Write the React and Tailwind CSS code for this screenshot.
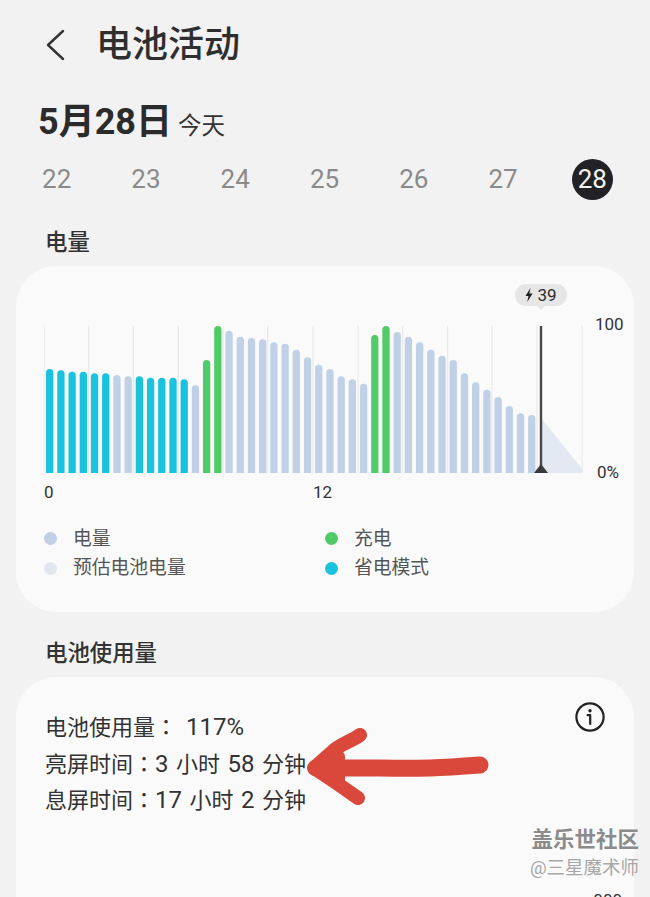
const CYAN = "#19c3dd";
const GREEN = "#50cb68";
const BLUE = "#c0d0e6";

const tops = [297,301,305,305,310,310,315,319,319,323,323,323,328,346,270,168,182,200,204,208,217,221,239,262,284,297,319,328,341,195,168,186,200,217,239,257,270,310,337,359,381,408,430,435];
const colorOf = (i) => {
  if (i <= 5 || (i >= 8 && i <= 12)) return CYAN;
  if (i === 14 || i === 15 || i === 29 || i === 30) return GREEN;
  return BLUE;
};

function Chart() {
  const grid = [44, 88.7, 133.3, 178.3, 223, 267.7, 313, 358, 402.7, 447.7, 492, 537, 582];
  return (
    <svg width="539" height="148" viewBox="44 326 539 148" className="shrink-0 block">
      {grid.map((x) => (
        <rect key={x} x={x - 0.5} y="326" width="1" height="147" fill="#e5e5e5" />
      ))}
      <polygon points="541,418 583,470 583,473 541,473" fill="#e3e9f2" />
      {tops.map((t, i) => {
        const cx = 49.7 + i * 11.21;
        const top = 270 + t / 3;
        const l = cx - 3.65;
        const r = cx + 3.65;
        return (
          <path
            key={i}
            d={`M${l} 473 V${top + 3.65} A3.65 3.65 0 0 1 ${r} ${top + 3.65} V473 Z`}
            fill={colorOf(i)}
          />
        );
      })}
      <rect x="539.8" y="326" width="2.4" height="147" fill="#484848" />
      <polygon points="541,464 548,473 534,473" fill="#3a3a3a" />
    </svg>
  );
}

function Legend({ color, label }) {
  return (
    <div className="flex items-center h-[29.5px]">
      <span className="w-[13px] h-[13px] rounded-full shrink-0" style={{ background: color }} />
      <span className="ml-[16px] text-[18.8px] leading-[24px] text-[#555555]">{label}</span>
    </div>
  );
}

const Colon = () => <span className="font-['Noto_Sans_CJK_TC',sans-serif]">：</span>;
const Num = ({ children }) => <span className="text-[24px]">{children}</span>;

export default function App() {
  const days = [22, 23, 24, 25, 26, 27];
  return (
    <div className="relative h-[897px] w-[650px] overflow-hidden bg-[#f2f2f2] text-[#2b2b2b] font-['Roboto','Noto_Sans_CJK_SC',sans-serif]">
      <div className="flex items-center h-[90px] pl-[46px]">
        <svg width="20" height="32" viewBox="0 0 20 32" fill="none" className="shrink-0">
          <polyline points="17,2 2,16 17,30" stroke="#333333" strokeWidth="2.4" strokeLinecap="round" strokeLinejoin="round" />
        </svg>
        <h1 className="ml-[30px] text-[36px] leading-[44px] font-medium text-[#2e2e2e]">电池活动</h1>
      </div>

      <div className="flex items-baseline h-[64px] pl-[38px] pt-[10px]">
        <span className="text-[36px] leading-[44px] font-bold text-[#2b2b2b]">5月28日</span>
        <span className="ml-[6px] text-[23.5px] leading-[30px] text-[#333333]">今天</span>
      </div>

      <div className="grid grid-cols-7 w-[625px] ml-[12px] h-[50px] items-center justify-items-center">
        {days.map((d) => (
          <span key={d} className="text-[26px] leading-[32px] text-[#8a8a8a]">{d}</span>
        ))}
        <span className="flex items-center justify-center w-[41px] h-[41px] rounded-full bg-[#222226] text-[26px] leading-[32px] text-[#f4f4f4]">28</span>
      </div>

      <div className="h-[62px] pt-[24px] pl-[45px] text-[22.4px] leading-[28px] font-medium text-[#333333]">电量</div>

      <section className="relative mx-[16px] h-[346px] rounded-[40px] bg-[#fafafa]">
        <div className="flex pl-[28px] pt-[60px]">
          <Chart />
          <div className="ml-[12px] -mt-[14px] flex h-[172px] flex-col justify-between text-[17px] leading-[24px] text-[#333333]">
            <span>100</span>
            <span className="ml-[2px]">0%</span>
          </div>
        </div>
        <div className="flex pl-[28px] -mt-[3px] text-[17px] leading-[22px] text-[#333333]">
          <span className="w-[269px]">0</span>
          <span>12</span>
        </div>
        <div className="grid grid-cols-[281px_1fr] pl-[28px] mt-[21px]">
          <Legend color="#c0d0e6" label="电量" />
          <Legend color="#50cb68" label="充电" />
          <Legend color="#e2e7ef" label="预估电池电量" />
          <Legend color="#19c3dd" label="省电模式" />
        </div>

        <div className="absolute left-[499px] top-[18px] flex h-[22px] w-[52px] items-center justify-center rounded-full bg-[#e6e6e6] text-[17px] leading-[22px] text-[#2b2b2b]">
          <svg width="8" height="14" viewBox="0 0 8 14" className="mr-[4px]">
            <polygon points="5.5,0 0.5,8 3.5,8 2.2,14 7.6,5.4 4.4,5.4" fill="#222222" />
          </svg>
          39
          <span className="absolute left-[23px] top-[19px] h-[6px] w-[6px] rotate-45 bg-[#e6e6e6]" />
        </div>
      </section>

      <div className="h-[65px] pt-[27px] pl-[45px] text-[22.4px] leading-[28px] font-medium text-[#333333]">电池使用量</div>

      <section className="mx-[16px] h-[300px] rounded-t-[40px] bg-[#fafafa] pl-[29px] pr-[29px] pt-[30px]">
        <div className="flex items-start justify-between">
          <div className="text-[22px] text-[#333333] [word-spacing:2px]">
            <div className="h-[36.5px] leading-[36.5px]">电池使用量<Colon /><span className="ml-[9px]"><Num>117%</Num></span></div>
            <div className="h-[36.5px] leading-[36.5px]">亮屏时间<Colon /><Num>3</Num> 小时 <Num>58</Num> 分钟</div>
            <div className="h-[36.5px] leading-[36.5px]">息屏时间<Colon /><Num>17</Num> 小时 <Num>2</Num> 分钟</div>
          </div>
          <svg width="30" height="30" viewBox="0 0 30 30" fill="none" className="-mt-[5px] shrink-0">
            <circle cx="15" cy="15" r="13.6" stroke="#222222" strokeWidth="2.2" />
            <circle cx="15" cy="8.8" r="1.7" fill="#222222" />
            <path d="M12.6 13.2H15.2V22" stroke="#222222" strokeWidth="2.2" strokeLinecap="round" strokeLinejoin="round" />
          </svg>
        </div>
        <div className="mt-[72px] flex justify-end text-[17px] leading-[22px] text-[#333333]">
          <span className="mr-[-17px]">000</span>
        </div>
      </section>

      <svg width="650" height="120" viewBox="0 720 650 120" fill="none" className="absolute left-0 top-[720px]">
        <g stroke="#d9483a" strokeLinecap="round" strokeLinejoin="round">
          <path d="M480 765 C440 768 420 769 380 768 L316 768" strokeWidth="17" />
          <path d="M360 735 C350 742 338 745 331 753 L314 768 L335 782 L358 798" strokeWidth="14" />
          <path d="M316 768 L338 757 L338 779 Z" strokeWidth="14" fill="#d9483a" />
        </g>
      </svg>

      <div className="absolute right-[11px] top-[826px] flex flex-col items-end">
        <span className="text-[21.5px] leading-[28px] font-bold text-[#8b8b8b]">盖乐世社区</span>
        <span className="text-[18.5px] leading-[28px] text-[#a8a8a8]">@三星魔术师</span>
      </div>
    </div>
  );
}
